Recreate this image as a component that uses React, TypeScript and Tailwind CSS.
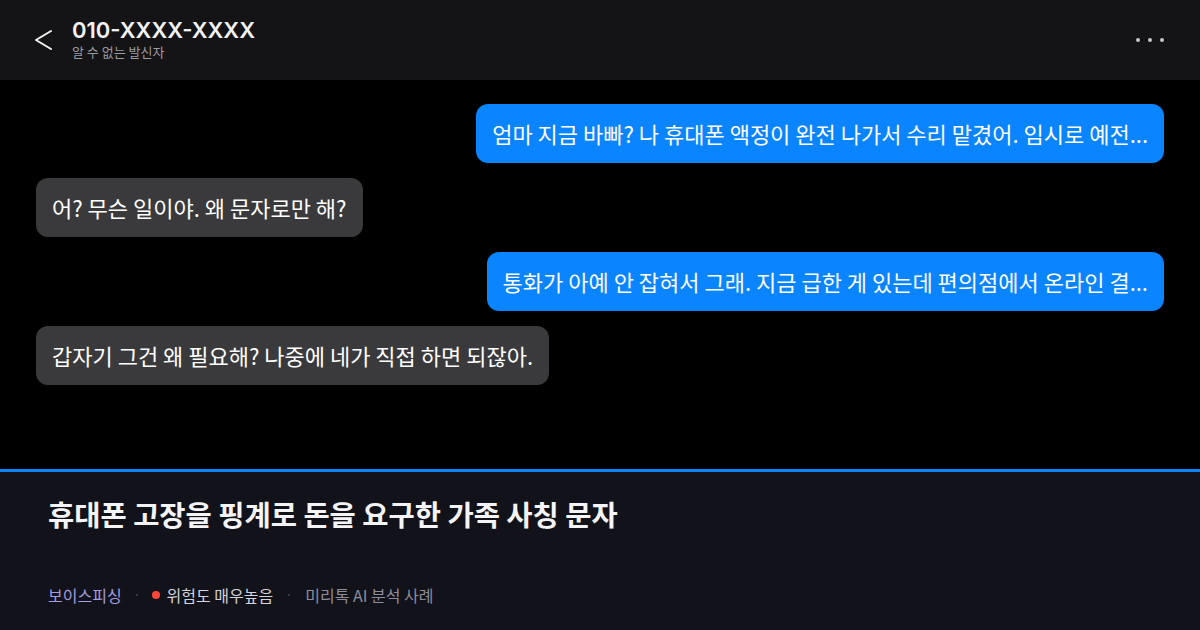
const messages = [
  { me: true, text: "엄마 지금 바빠? 나 휴대폰 액정이 완전 나가서 수리 맡겼어. 임시로 예전..." },
  { me: false, text: "어? 무슨 일이야. 왜 문자로만 해?" },
  { me: true, text: "통화가 아예 안 잡혀서 그래. 지금 급한 게 있는데 편의점에서 온라인 결..." },
  { me: false, text: "갑자기 그건 왜 필요해? 나중에 네가 직접 하면 되잖아." },
];

export default function App() {
  return (
    <div
      className="w-[1200px] h-[630px] flex flex-col bg-black overflow-hidden"
      style={{ fontFamily: '"Noto Sans CJK KR", "Noto Sans", sans-serif' }}
    >
      {/* 헤더 */}
      <header className="h-[80px] shrink-0 bg-[#141416] flex items-center pl-[34px] pr-[36px]">
        <svg width="19" height="22" viewBox="0 0 19 22" fill="none" className="text-[#f2f2f2]">
          <path d="M17 2 L2 11 L17 20" stroke="currentColor" strokeWidth="2" strokeLinecap="round" strokeLinejoin="round" />
        </svg>
        <div className="ml-[19px] flex flex-col -mt-[2px]">
          <span
            className="text-[22px] leading-[24px] font-semibold text-[#f2f2f4]"
            style={{ fontFamily: 'Inter, "Noto Sans CJK KR", sans-serif' }}
          >
            010-XXXX-XXXX
          </span>
          <span className="text-[13px] leading-[16px] text-[#9a9aa0] mt-[2px]">알 수 없는 발신자</span>
        </div>
        <div className="ml-auto flex items-center gap-[8px]">
          <span className="w-[4px] h-[4px] rounded-full bg-[#c8c8cc]" />
          <span className="w-[4px] h-[4px] rounded-full bg-[#c8c8cc]" />
          <span className="w-[4px] h-[4px] rounded-full bg-[#c8c8cc]" />
        </div>
      </header>

      {/* 대화 */}
      <div className="flex-1 flex flex-col gap-[15px] px-[36px] pt-[24px]">
        {messages.map((m, i) => (
          <div key={i} className={`flex ${m.me ? "justify-end" : "justify-start"}`}>
            <div
              className={`h-[59px] flex items-center px-[16px] rounded-[12px] text-[22px] text-white ${
                m.me ? "bg-[#0a84ff]" : "bg-[#3a3a3c]"
              }`}
            >
              {m.text}
            </div>
          </div>
        ))}
      </div>

      {/* 하단 정보 */}
      <div className="h-[161px] shrink-0 bg-[#12121a] border-t-[3px] border-[#0a84ff] px-[48px] flex flex-col">
        <h1 className="mt-[22px] text-[28.5px] leading-[40px] font-bold text-[#f4f4f6]">
          휴대폰 고장을 핑계로 돈을 요구한 가족 사칭 문자
        </h1>
        <div className="mt-[51px] flex items-center text-[16px] leading-[20px]">
          <span className="text-[#a29ee0]">보이스피싱</span>
          <span className="mx-[14px] w-[2px] h-[2px] rounded-full bg-[#4a4a55]" />
          <span className="w-[8px] h-[8px] rounded-full bg-[#ff453a] mr-[7px]" />
          <span className="text-[#d4d4dc]">위험도 매우높음</span>
          <span className="mx-[15px] w-[2px] h-[2px] rounded-full bg-[#4a4a55]" />
          <span className="text-[#8e8e9a]">미리톡 AI 분석 사례</span>
        </div>
      </div>
    </div>
  );
}
